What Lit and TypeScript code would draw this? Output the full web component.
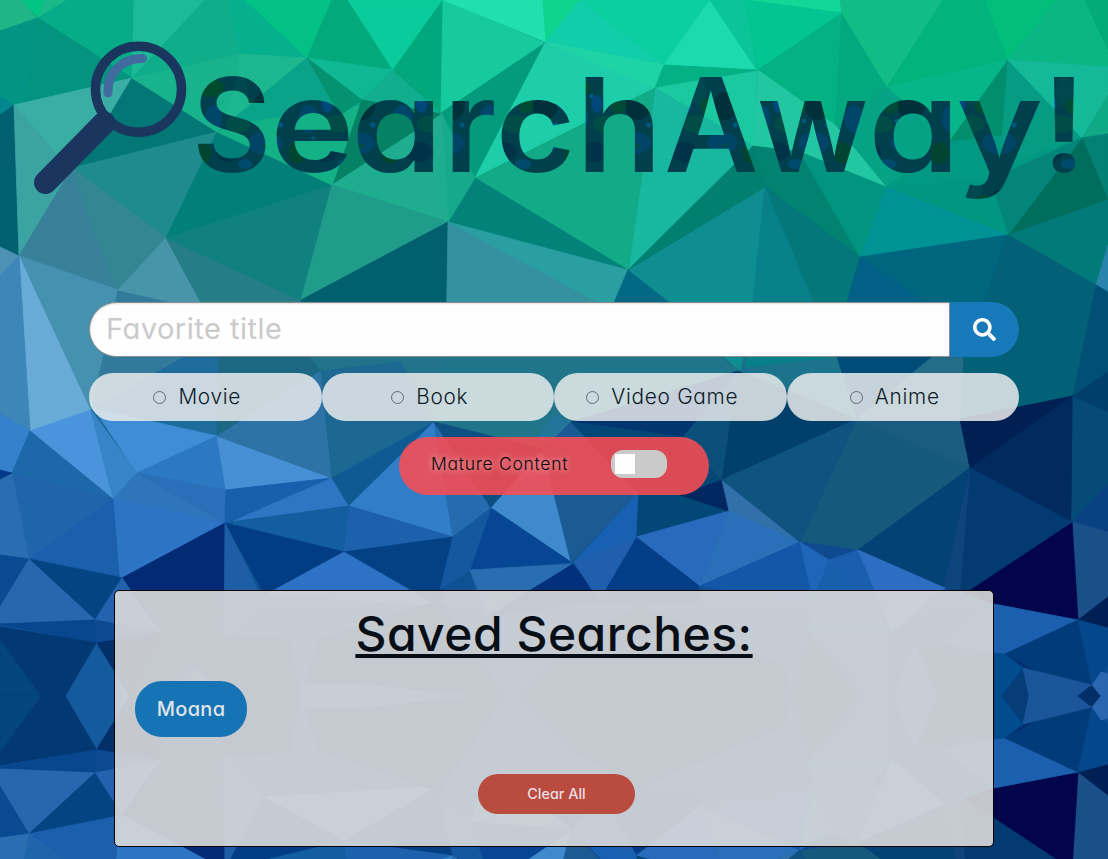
import { LitElement, html, svg, css } from "lit";
import { customElement, property } from "lit/decorators.js";

// Facets of the low-poly backdrop: [fill, points]. The sheet is 696px tall and repeats mirrored below.
const FACETS: [string, string][] = [
  ["#1fb584", "0,0 22,0 36,18 0,31"],
  ["#00c583", "22,0 45,0 38,18"],
  ["#1bb98a", "45,0 67,0 38,18"],
  ["#05ac87", "67,0 134,0 132,78 38,18"],
  ["#029584", "0,31 38,18 28,102 14,105 0,97"],
  ["#03937f", "38,18 132,78 26,103"],
  ["#02868f", "0,97 14,105 0,115"],
  ["#006070", "0,115 14,105 19,256 0,247"],
  ["#3aaea5", "14,105 132,78 108,118 60,158"],
  ["#3ca3a3", "14,105 60,158 75,172 19,256"],
  ["#027775", "132,78 217,132 72,168 60,158 108,118"],
  ["#1f8b8d", "217,132 166,238 72,168"],
  ["#39809a", "72,168 19,256 118,290 95,235"],
  ["#358693", "72,168 95,235 118,290 166,238"],
  ["#4691b0", "19,256 118,290 91,410"],
  ["#68abd7", "19,256 91,410 30,431"],
  ["#4691b0", "21,257 118,290 105,350 91,410 33,285"],
  ["#327a9c", "118,290 200,303 184,357 91,410 105,350"],
  ["#4895a9", "166,238 118,290 205,310"],
  ["#257e87", "166,238 301,300 321,373 205,310"],
  ["#037f7a", "217,132 332,185 166,238"],
  ["#10817e", "332,185 301,300 166,238"],
  ["#1dba97", "134,0 205,0 132,78"],
  ["#10ad8b", "205,0 228,0 240,54 132,78"],
  ["#06b08f", "228,0 245,0 307,58 240,54"],
  ["#03c184", "245,0 332,0 307,58"],
  ["#03a97b", "332,0 348,0 393,70 307,58"],
  ["#0bca9b", "348,0 443,0 393,70"],
  ["#18b28c", "132,78 240,54 234,90 217,132"],
  ["#1cb68f", "240,54 307,58 217,132 234,90"],
  ["#0aa38a", "307,58 362,100 332,150 217,132"],
  ["#14b187", "217,132 250,122 362,105 332,185"],
  ["#0fb893", "307,58 393,70 362,100"],
  ["#049270", "307,58 362,100 340,115"],
  ["#10ad8f", "393,70 362,100 442,114"],
  ["#058264", "362,100 442,114 334,183"],
  ["#02a87b", "443,0 393,70 441,113"],
  ["#16ca9e", "443,0 545,43 441,113"],
  ["#22dfb0", "443,0 543,0 546,42"],
  ["#0fd490", "543,0 580,0 546,42"],
  ["#11cda9", "580,0 664,65 546,42"],
  ["#0bcfa0", "580,0 710,0 664,65"],
  ["#039b7c", "545,43 475,178 441,113"],
  ["#1eceab", "545,43 664,65 655,88 475,178"],
  ["#1ed4a6", "546,42 664,65 655,88"],
  ["#1ddaae", "710,0 664,65 757,70"],
  ["#09c598", "710,0 745,0 757,70"],
  ["#03b185", "664,65 757,70 655,88"],
  ["#1bc9a0", "655,88 757,71 753,146"],
  ["#18b7a0", "655,88 753,146 733,168 628,270"],
  ["#13ab87", "655,88 628,270 475,178"],
  ["#028278", "475,178 628,270 448,222"],
  ["#17a98b", "442,114 475,178 448,222"],
  ["#1fad90", "442,114 448,222 332,185"],
  ["#209c8b", "332,185 448,222 301,300"],
  ["#02606e", "448,222 446,340 321,373 301,300"],
  ["#3590a0", "448,222 612,307 612,357 446,357"],
  ["#2a9fa1", "448,222 628,270 611,312 600,303"],
  ["#0f8e92", "628,270 765,187 755,300 740,371"],
  ["#037f70", "628,270 753,146 765,187"],
  ["#036884", "628,270 613,305 672,305"],
  ["#12d796", "745,0 840,0 842,13"],
  ["#04c592", "745,0 842,13 758,70"],
  ["#03b183", "842,13 835,125 758,70"],
  ["#04a87f", "842,13 887,87 835,130"],
  ["#12bd85", "840,0 943,0 887,87 842,13"],
  ["#02b47b", "943,0 985,0 1008,60 887,87"],
  ["#02bd7b", "985,0 1057,0 1008,60"],
  ["#0ab784", "1057,0 1085,0 1108,50 1108,67 1008,60"],
  ["#04aa78", "1085,0 1108,0 1108,50"],
  ["#05a286", "887,87 950,140 886,187 835,130"],
  ["#22c7a2", "758,70 835,125 886,187 800,152 753,146"],
  ["#07b688", "887,87 1008,60 950,140"],
  ["#019982", "886,187 950,140 1003,130 1082,138 990,180"],
  ["#028e6c", "1008,60 950,141 1003,135"],
  ["#069c84", "1008,60 1082,138 1000,165"],
  ["#15b898", "1008,60 1108,67 1108,100 1082,138"],
  ["#10a986", "1108,95 1108,134 1082,138"],
  ["#048075", "1082,138 1108,134 1108,200"],
  ["#016d5d", "1082,138 1108,200 1008,235"],
  ["#04857a", "1082,138 990,180 1008,235"],
  ["#009680", "886,187 990,180 1008,235"],
  ["#009396", "886,187 1008,235 860,257"],
  ["#028270", "753,146 800,152 860,257 765,187"],
  ["#019480", "800,152 886,187 860,257"],
  ["#037779", "765,187 860,257 845,320 820,320"],
  ["#07808a", "765,187 825,330 837,357 746,368"],
  ["#006680", "860,257 1008,235 985,300 960,370 845,310"],
  ["#006085", "860,257 925,302 845,310"],
  ["#027a79", "1008,235 1108,200 1108,245 1096,285"],
  ["#046076", "1008,235 1096,285 1073,396 960,419 963,350 985,300"],
  ["#2a83ac", "1096,285 1108,245 1108,292"],
  ["#005075", "1096,285 1108,292 1108,372 1073,396"],
  ["#4d92b4", "0,247 19,256 0,275"],
  ["#3f86b8", "0,275 19,256 30,431 0,414"],
  ["#3480cc", "0,414 30,431 12,473 0,470"],
  ["#4a94dc", "30,431 91,410 113,499"],
  ["#1d68a8", "30,431 113,499 12,473"],
  ["#3884c8", "91,410 137,473 113,499"],
  ["#1e6b9e", "91,410 184,357 219,357 217,436"],
  ["#3f8dd5", "91,408 217,436 137,473 98,415"],
  ["#1c6883", "184,357 321,357 321,373 217,436 219,357"],
  ["#2c78c3", "217,436 226,490 137,473"],
  ["#468fd5", "217,436 332,478 226,490"],
  ["#2d73a6", "321,371 332,478 217,436"],
  ["#20738a", "310,357 445,357 443,363 434,422 332,478 321,371"],
  ["#1c6892", "321,371 400,362 434,422 332,478"],
  ["#2f75bc", "137,473 225,523 113,499"],
  ["#2a70b8", "137,473 226,490 225,523"],
  ["#2d75c4", "113,499 225,523 122,578 119,576"],
  ["#2065ac", "12,473 113,499 29,559"],
  ["#1b5fad", "113,499 119,576 29,559"],
  ["#2a6db0", "12,473 29,559 0,555 0,478"],
  ["#043a88", "0,470 12,473 0,479"],
  ["#185fad", "226,490 332,478 225,523"],
  ["#2e76c3", "332,478 349,506 233,521"],
  ["#135e9e", "225,523 349,506 344,552"],
  ["#1d60a8", "349,506 370,512 370,560 344,552"],
  ["#023c82", "225,523 344,552 265,595"],
  ["#022a75", "225,523 224,640 160,632 122,578"],
  ["#1d5ea6", "225,523 262,598 224,638"],
  ["#105a94", "332,478 434,422 349,506"],
  ["#327dc7", "434,422 453,537 349,506"],
  ["#1d60ac", "349,506 453,537 344,552"],
  ["#034184", "344,552 453,537 440,605"],
  ["#246cae", "434,422 491,508 453,537"],
  ["#20758a", "443,363 446,355 716,355 740,371 571,422 548,450 434,422"],
  ["#24759a", "554,415 571,422 600,450 535,440"],
  ["#0c4f80", "434,422 548,450 491,508"],
  ["#3e8acd", "491,508 543,450 571,562"],
  ["#064694", "491,508 571,562 470,570"],
  ["#15589f", "453,537 491,508 470,570 440,590"],
  ["#1b5a92", "543,450 571,422 638,493 571,562"],
  ["#003570", "571,422 738,371 683,437"],
  ["#024775", "571,422 683,437 722,480 729,511 636,537 638,493"],
  ["#0a5078", "738,371 722,480 683,437"],
  ["#00406a", "738,371 857,419 738,472 722,480"],
  ["#012860", "680,495 722,480 729,511"],
  ["#1860b2", "638,493 636,537 574,562"],
  ["#336fa8", "722,480 800,542 729,511"],
  ["#2a6abc", "636,537 729,511 700,586"],
  ["#2a70b8", "729,511 800,542 738,570 700,586"],
  ["#053e88", "636,537 698,585 702,605 597,605"],
  ["#1b748c", "746,368 837,357 857,419"],
  ["#004c78", "837,357 932,357 866,410 857,419"],
  ["#236d88", "857,419 932,357 963,357 960,419"],
  ["#1b5c80", "857,419 960,419 970,468"],
  ["#155a7c", "857,419 970,468 858,550 800,542"],
  ["#0f5480", "857,419 800,542 722,480"],
  ["#001f52", "960,419 1073,396 970,468"],
  ["#012a5e", "1073,396 1071,522 970,468"],
  ["#064a78", "1073,396 1108,412 1108,485 1072,522"],
  ["#003f6c", "1108,372 1108,412 1073,396"],
  ["#084282", "1108,485 1108,532 1072,522"],
  ["#1a5088", "1072,522 1108,532 1108,598 1078,620"],
  ["#02054b", "1072,522 1078,620 994,604 965,593"],
  ["#044175", "970,468 945,588 858,550"],
  ["#033a72", "970,468 1072,522 965,593 945,588"],
  ["#0f457f", "970,468 960,590 944,588"],
  ["#0f4a90", "858,550 829,560 800,542"],
  ["#1357a8", "800,542 815,605 700,586"],
  ["#1e66b8", "800,542 829,560 813,600"],
  ["#1a5faf", "829,560 858,550 880,605 813,605"],
  ["#2d6dc2", "858,550 945,588 892,632"],
  ["#1860ae", "829,560 892,632 808,632"],
  ["#0a4a92", "0,555 29,559 0,607"],
  ["#054482", "29,559 122,578 95,620"],
  ["#2667ae", "29,559 95,620 0,624 0,607"],
  ["#08468e", "0,624 95,620 97,643"],
  ["#023975", "0,627 97,643 66,696 0,696"],
  ["#04457d", "0,640 41,696 0,696"],
  ["#165a9e", "97,643 130,696 66,696"],
  ["#2363ae", "122,578 160,632 95,620"],
  ["#0e4a90", "95,620 160,632 97,643"],
  ["#022f68", "97,643 160,632 130,696"],
  ["#2d72c4", "344,552 435,605 265,595"],
  ["#2a6db0", "470,570 573,564 487,617"],
  ["#02307a", "573,564 593,590 600,600 487,617"],
  ["#205fae", "574,562 636,537 603,593 594,593"],
  ["#1c5fae", "994,604 1078,620 1005,654 945,642"],
  ["#001f55", "1078,620 1108,597 1108,628"],
  ["#023b7a", "1078,620 1092,685 1023,668 1005,654"],
  ["#04478a", "1078,620 1108,628 1108,665 1092,685"],
  ["#022f70", "1005,654 1035,671 1023,668"],
  ["#004c8e", "1005,654 1023,668 1002,696 994,696 994,654"],
  ["#053d78", "1023,668 1029,696 1002,696"],
  ["#1c569a", "1023,668 1092,685 1078,696 1029,696"],
  ["#022f68", "1092,685 1101,696 1078,696"],
  ["#2b66b0", "1092,685 1101,672 1108,674 1108,696 1101,696"],
  ["#023070", "160,632 290,640 300,696 130,696"],
  ["#0d5090", "195,667 229,696 160,696"],
  ["#023878", "320,640 440,600 505,696 300,696"],
  ["#1559a0", "300,683 370,685 466,696 300,696"],
  ["#023070", "575,640 640,605 783,665 790,696 515,696"],
  ["#053f70", "808,632 867,696 790,696"],
  ["#0f559c", "892,632 890,696 867,696 808,632"],
  ["#063f78", "915,645 994,655 994,696 937,696"],
  ["#155c9e", "915,645 937,696 893,696"],
];

const BLOBS: [string, number, number, number, number][] = [
  ["#004a2e", 14, 12, 15, 9],
  ["#00474f", 47, 15, 8, 15],
  ["#00303a", 73, 30, 12, 14],
  ["#00466a", 18, 43, 9, 14],
  ["#004c46", 44, 48, 13, 9],
  ["#004568", 70, 67, 15, 11],
  ["#003248", 33, 76, 13, 10],
  ["#00452f", 7, 77, 8, 11],
  ["#004a6c", 52, 88, 8, 5],
  ["#004c36", 86, 13, 6, 4],
  ["#00477a", 35, 28, 5, 9],
  ["#004a36", 55, 30, 7, 8],
  ["#005a80", 30, 20, 2.2, 2.2],
  ["#005a78", 60, 45, 2.2, 2.2],
  ["#00503a", 73, 70, 2, 2],
  ["#005880", 83, 49, 2.4, 2.4],
  ["#005880", 22, 62, 1.8, 1.8],
];

// Wordmark glyphs: [character, ink left edge, side bearing, horizontal stretch]
const GLYPHS: [string, number, number, number][] = [
  ["S", 198, 6, 0.93],
  ["e", 276, 5, 1.09],
  ["a", 357, 5, 1.13],
  ["r", 452, 8, 1.02],
  ["c", 501, 5, 1.05],
  ["h", 585, 8, 1.08],
  ["A", 667, 3, 1],
  ["w", 759, 2, 1.02],
  ["a", 874, 5, 1.13],
  ["y", 960, 3, 1.13],
  ["!", 1052, 10, 1.1],
];

const drawFacets = () =>
  FACETS.map(([c, p]) => svg`<polygon points=${p} fill=${c} stroke=${c} stroke-width="0.8" stroke-linejoin="round"></polygon>`);

@customElement("poly-backdrop")
export class PolyBackdrop extends LitElement {
  static styles = css`
    :host { position: absolute; inset: 0; z-index: -1; display: block; overflow: hidden; }
    svg { display: block; }
  `;
  render() {
    return html`<svg width="1108" height="859" viewBox="0 0 1108 859" aria-hidden="true">
      <defs>
        <linearGradient id="base" x1="0" y1="0" x2="0" y2="1">
          <stop offset="0" stop-color="#0aa585"></stop>
          <stop offset="0.3" stop-color="#137f88"></stop>
          <stop offset="0.5" stop-color="#1b6692"></stop>
          <stop offset="0.7" stop-color="#0d4f94"></stop>
          <stop offset="1" stop-color="#0a4a90"></stop>
        </linearGradient>
        <clipPath id="sheet"><rect width="1108" height="696.5"></rect></clipPath>
      </defs>
      <rect width="1108" height="859" fill="url(#base)"></rect>
      <g clip-path="url(#sheet)">${drawFacets()}</g>
      <g transform="translate(0 1392) scale(1 -1)"><g clip-path="url(#sheet)">${drawFacets()}</g></g>
    </svg>`;
  }
}

@customElement("site-logo")
export class SiteLogo extends LitElement {
  static styles = css`
    :host { display: block; height: 302px; }
    svg { display: block; }
    .word { font: 620 130px Inter, "Noto Sans", sans-serif; font-feature-settings: "cv11"; }
  `;
  render() {
    return html`<svg width="1108" height="302" viewBox="0 0 1108 302" role="img" aria-label="SearchAway!">
      <defs>
        <pattern id="camo" width="91" height="97" patternUnits="userSpaceOnUse" x="197" y="76">
          <rect width="91" height="97" fill="#003f4c"></rect>
          ${BLOBS.map(([c, x, y, rx, ry]) => svg`<ellipse cx=${x} cy=${y} rx=${rx} ry=${ry} fill=${c}></ellipse>`)}
        </pattern>
      </defs>
      <path d="M104 123 L45.500 182.500" stroke="#1a365f" stroke-width="23" stroke-linecap="round"></path>
      <circle cx="138.500" cy="89.300" r="43" fill="none" stroke="#1a365f" stroke-width="9.500"></circle>
      <path d="M108 93 C107 74 121 58 142.500 58.500" fill="none" stroke="#416b9e" stroke-width="9" stroke-linecap="round"></path>
      <g class="word" fill="url(#camo)">${GLYPHS.map(([ch, left, bearing, stretch]) => svg`<text x=${left - bearing} y="172" transform=${`translate(${left} 0) scale(${stretch} 1) translate(${-left} 0)`}>${ch}</text>`)}</g>
    </svg>`;
  }
}

@customElement("category-option")
export class CategoryOption extends LitElement {
  @property() label = "";
  static styles = css`
    :host { flex: 1; display: flex; }
    .pill {
      flex: 1; height: 48px; border-radius: 24px; box-sizing: border-box; padding-right: 17px;
      background: rgba(238, 238, 238, 0.83);
      display: flex; align-items: center; justify-content: center; gap: 12px;
      font: 300 20.800px Inter, "Noto Sans", sans-serif; font-feature-settings: "cv11"; letter-spacing: 0.700px; color: #0c1c28;
      white-space: nowrap;
    }
    .pill > :last-child { margin: -2px -1px 0 0; }
    .dot { width: 13px; height: 13px; box-sizing: border-box; border: 1px solid #5f6c78; border-radius: 50%; margin-top: 1px; }
  `;
  render() {
    return html`<label class="pill"><span class="dot"></span><span>${this.label}</span></label>`;
  }
}

@customElement("app-root")
export class AppRoot extends LitElement {
  static styles = css`
    :host {
      display: block; position: relative; z-index: 0; width: 1108px; height: 859px; overflow: hidden;
      font-family: Inter, "Noto Sans", sans-serif; font-feature-settings: "cv11";
    }
    .controls { width: 930px; margin: 0 auto; display: flex; flex-direction: column; align-items: center; gap: 16px; }
    .search { display: flex; width: 930px; height: 55px; }
    .field {
      flex: 1; box-sizing: border-box; border: 1px solid #8c8c8c; border-radius: 28px 0 0 28px; background: #fefefe;
      box-shadow: inset 0 1px 2px rgba(10, 10, 10, 0.12); letter-spacing: 0.500px;
      padding: 0 16px 2px; font: 400 29px Inter, "Noto Sans", sans-serif; font-feature-settings: "cv11"; outline: none; min-width: 0;
    }
    .field::placeholder { color: #cacaca; opacity: 1; }
    .go { width: 69px; border: 0; border-radius: 0 28px 28px 0; background: #1779ba; padding: 0; display: grid; place-items: center; }
    .options { display: flex; width: 930px; }
    .mature { width: 310px; height: 58px; box-sizing: border-box; border-radius: 29px; background: rgba(255, 76, 81, 0.86);
      display: flex; align-items: flex-start; justify-content: space-between; padding: 13px 42px 0 32px; }
    .mature-label { font-size: 17.500px; line-height: 28px; color: #0a0a0a; text-shadow: 0 0 6px rgba(255, 255, 255, 0.7);
      font-weight: 350; letter-spacing: 0.720px; white-space: nowrap; }
    .switch { width: 56px; height: 28px; box-sizing: border-box; border-radius: 12px; background: #cacaca; padding: 4px; }
    .knob { display: block; width: 20px; height: 20px; background: #fefefe; }
    .saved { width: 880px; height: 257px; box-sizing: border-box; margin: 95px auto 0; border: 1px solid #000; border-radius: 5px;
      background: rgba(218, 218, 218, 0.9); padding: 12px 20px 0; display: flex; flex-direction: column; align-items: center; }
    .heading { margin: 0; font-size: 48px; line-height: 62px; font-weight: 500; letter-spacing: 0.500px; color: #080e16; text-decoration: underline;
      text-decoration-thickness: 4px; text-underline-offset: 3px; text-decoration-skip-ink: none; white-space: nowrap; }
    .tag { align-self: flex-start; margin-top: 16px; width: 112px; height: 56px; border: 0; border-radius: 27px; padding: 0; letter-spacing: 0.300px;
      background: #1774b4; color: #dfe4ea; font: 500 20px Inter, "Noto Sans", sans-serif; font-feature-settings: "cv11"; }
    .clear { margin: 37px 0 0 5px; width: 157px; height: 40px; border: 0; border-radius: 20px; padding: 0 0 1px;
      background: #ba4b3f; color: #eadfe2; font: 500 14.400px Inter, "Noto Sans", sans-serif; font-feature-settings: "cv11"; }
  `;
  render() {
    return html`
      <poly-backdrop></poly-backdrop>
      <site-logo></site-logo>
      <section class="controls">
        <div class="search">
          <input class="field" type="text" placeholder="Favorite title" />
          <button class="go" aria-label="Search">
            <svg width="23" height="23" viewBox="0 0 512 512" fill="#fefefe"><path d="M505 442.700L405.300 343c-4.500-4.500-10.600-7-17-7H372c27.600-35.300 44-79.700 44-128C416 93.100 322.900 0 208 0S0 93.100 0 208s93.100 208 208 208c48.300 0 92.700-16.400 128-44v16.300c0 6.400 2.500 12.500 7 17l99.700 99.700c9.400 9.400 24.600 9.400 33.900 0l28.300-28.300c9.400-9.400 9.400-24.600.1-34zM208 336c-70.700 0-128-57.200-128-128 0-70.700 57.200-128 128-128 70.700 0 128 57.200 128 128 0 70.700-57.200 128-128 128z"></path></svg>
          </button>
        </div>
        <div class="options">
          ${["Movie", "Book", "Video Game", "Anime"].map((l) => html`<category-option .label=${l}></category-option>`)}
        </div>
        <div class="mature">
          <span class="mature-label">Mature Content</span>
          <span class="switch"><span class="knob"></span></span>
        </div>
      </section>
      <section class="saved">
        <h2 class="heading">Saved Searches:</h2>
        <button class="tag">Moana</button>
        <button class="clear">Clear All</button>
      </section>
    `;
  }
}
